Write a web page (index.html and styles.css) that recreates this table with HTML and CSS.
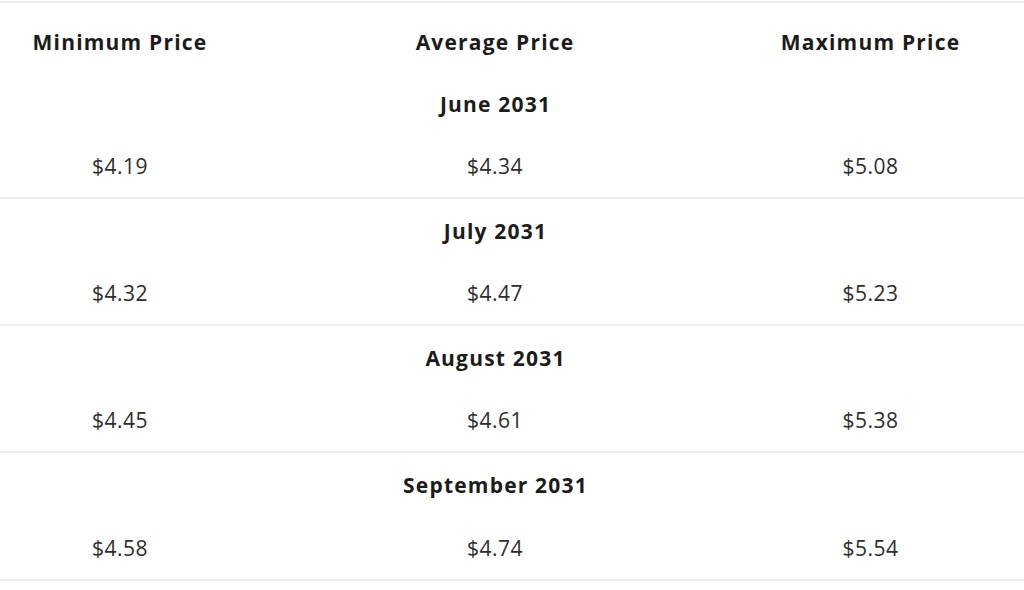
FILE: index.html
```html
<!DOCTYPE html>
<html>
<head>
<meta charset="utf-8">
<link rel="stylesheet" href="styles.css">
</head>
<body>
<div class="table">
  <div class="row head">
    <div class="cell">Minimum Price</div>
    <div class="cell">Average Price</div>
    <div class="cell">Maximum Price</div>
  </div>
  <div class="group">
    <div class="row month"><div class="cell span">June 2031</div></div>
    <div class="row values">
      <div class="cell">$4.19</div><div class="cell">$4.34</div><div class="cell">$5.08</div>
    </div>
  </div>
  <div class="group">
    <div class="row month"><div class="cell span">July 2031</div></div>
    <div class="row values">
      <div class="cell">$4.32</div><div class="cell">$4.47</div><div class="cell">$5.23</div>
    </div>
  </div>
  <div class="group">
    <div class="row month"><div class="cell span">August 2031</div></div>
    <div class="row values">
      <div class="cell">$4.45</div><div class="cell">$4.61</div><div class="cell">$5.38</div>
    </div>
  </div>
  <div class="group">
    <div class="row month"><div class="cell span">September 2031</div></div>
    <div class="row values">
      <div class="cell">$4.58</div><div class="cell">$4.74</div><div class="cell">$5.54</div>
    </div>
  </div>
</div>
</body>
</html>
```

FILE: styles.css
```css
html, body {
  margin: 0;
  padding: 0;
  background: #ffffff;
}
body {
  font-family: "Open Sans", "Liberation Sans", sans-serif;
  color: #222222;
}
.table {
  margin-top: 1px;
  border-top: 2px solid #efefef;
}
.row {
  display: grid;
  grid-template-columns: 240px 510px 241px;
  padding-right: 33px;
  align-items: center;
  justify-items: center;
  box-sizing: border-box;
}
.head {
  height: 69px;
  padding-top: 9px;
  font-weight: 700;
  font-size: 21px;
  letter-spacing: 1.2px;
  color: #1c1c1c;
}
.group {
  border-bottom: 2px solid #efefef;
}
.month {
  height: 63px;
  font-weight: 700;
  font-size: 21px;
  letter-spacing: 1.2px;
  color: #1c1c1c;
}
.span {
  grid-column: 1 / 4;
}
.values {
  height: 62px;
  font-size: 21px;
  letter-spacing: 0.5px;
  color: #2e2e2e;
}
.group:last-child .values {
  height: 63px;
}
```
